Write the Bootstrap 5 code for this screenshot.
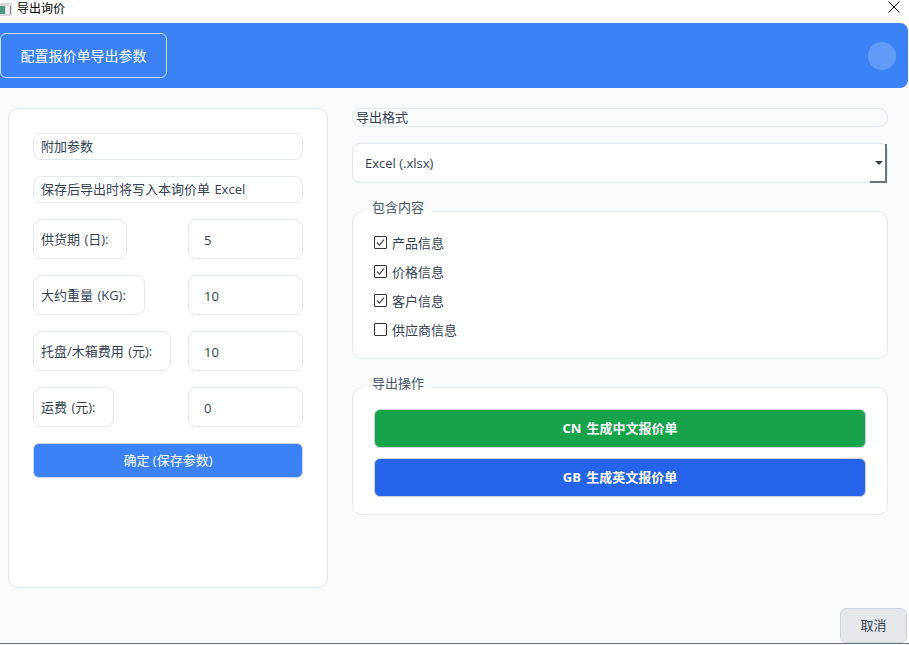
<!DOCTYPE html>
<html lang="zh-CN">
<head>
  <meta charset="UTF-8">
  <meta name="viewport" content="width=device-width, initial-scale=1.0">
  <title>导出询价</title>
  <link href="https://cdn.jsdelivr.net/npm/bootstrap@5.3.0/dist/css/bootstrap.min.css" rel="stylesheet">
  <style>
    html, body {
      height: 100%;
      overflow: hidden;
    }
    body {
      background-color: #f8fafc;
      color: #334155;
      font-family: "Open Sans", "Noto Sans CJK SC", sans-serif;
      font-size: 13px;
    }
    .app-shell {
      height: 644px;
      border-bottom: 1px solid #6b7280;
    }
    .title-bar {
      height: 23px;
      background: #fff;
      color: #000;
      font-size: 12px;
      padding-right: 9px;
    }
    .title-icon {
      width: 12px;
      height: 13px;
      margin-right: 5px;
    }
    .title-close {
      margin-top: 1px;
    }
    .head-bar {
      height: 65px;
      width: 908px;
      background: #3b82f6;
      border-radius: 0 8px 8px 0;
      padding: 10px 12px 10px 0;
    }
    .head-title {
      width: 167px;
      height: 45px;
      border: 1px solid rgba(255, 255, 255, .75);
      border-radius: 6px;
      color: #fff;
      font-size: 14px;
    }
    .head-dot {
      width: 28px;
      height: 28px;
      background: rgba(255, 255, 255, .2);
    }
    .page-main {
      padding: 20px 21px 0 8px;
      gap: 24px;
    }
    .side-panel {
      width: 320px;
      height: 480px;
      background: #fff;
      border: 1px solid #e2e8f0;
      border-radius: 10px;
      padding: 24px;
      gap: 16px;
    }
    .tag-box {
      background: #fff;
      border: 1px solid #e2e8f0;
      border-radius: 8px;
      padding: 0 7px;
      height: 27px;
      line-height: 25px;
      word-spacing: 1px;
    }
    .field-label {
      height: 40px;
      line-height: 38px;
      padding-right: 18px;
    }
    .num-input.form-control {
      width: 115px;
      height: 40px;
      padding: 1px 15px 0;
      font-size: 13px;
      color: #334155;
      border: 1px solid #e2e8f0;
      border-radius: 8px;
    }
    .save-btn.btn {
      height: 35px;
      background: #3b82f6;
      border: 1px solid #cbd5e1;
      border-radius: 6px;
      color: #fff;
      font-size: 13px;
      padding: 0;
    }
    .right-col {
      width: 536px;
      gap: 16px;
    }
    .format-label {
      height: 19px;
      line-height: 17px;
      background: #f8fafc;
      border: 1px solid #e2e8f0;
      border-radius: 9px;
      padding: 0 3px;
    }
    .format-pick {
      height: 40px;
    }
    .format-pick .form-select {
      height: 40px;
      padding: 2px 12px 0;
      font-size: 13px;
      color: #334155;
      background-image: none;
      border: 1px solid #e2e8f0;
      border-radius: 8px;
    }
    .drop-corner {
      position: absolute;
      top: 1px;
      right: 1px;
      width: 17px;
      height: 39px;
      border-right: 2px solid #6b7280;
      border-bottom: 2px solid #6b7280;
      pointer-events: none;
    }
    .drop-corner::after {
      content: "";
      position: absolute;
      top: 17px;
      left: 5px;
      border-style: solid;
      border-width: 4px 4px 0;
      border-color: #334155 transparent transparent;
    }
    .group-box {
      background: #fff;
      border: 1px solid #e2e8f0;
      border-radius: 10px;
      padding: 0 21px 17px;
    }
    .group-box legend {
      float: none;
      width: auto;
      margin: 0 0 0 -10px;
      padding: 0 8px 8px;
      font-size: 13px;
      line-height: 16px;
      color: #475569;
    }
    .check-list {
      padding-top: 11px;
      padding-bottom: 2px;
      gap: 11px;
    }
    .check-row.form-check {
      min-height: 18px;
      line-height: 18px;
      margin: 0;
      padding-left: 18px;
    }
    .check-row .form-check-input {
      width: 13px;
      height: 13px;
      margin: 2px 0 0 -18px;
      background-color: #fff;
      border: 1px solid #333;
      border-radius: 1px;
    }
    .check-row .form-check-input:checked {
      background-color: #fff;
      border-color: #333;
      background-size: 11px;
      background-image: url("data:image/svg+xml,%3csvg xmlns='http://www.w3.org/2000/svg' viewBox='0 0 11 11'%3e%3cpath fill='none' stroke='%23444' stroke-width='1.2' d='M2 5.5l2.4 2.6L9 2.6'/%3e%3c/svg%3e");
    }
    .action-list {
      padding-top: 10px;
      gap: 10px;
    }
    .make-btn.btn {
      height: 39px;
      border: 1px solid #cbd5e1;
      border-radius: 6px;
      color: #fff;
      font-size: 13px;
      font-weight: 700;
      padding: 0;
      word-spacing: 2px;
    }
    .make-cn.btn {
      background: #16a34a;
    }
    .make-en.btn {
      background: #2563eb;
    }
    .foot-bar {
      padding-right: 2px;
    }
    .cancel-btn.btn {
      width: 67px;
      height: 35px;
      background: #e5e7eb;
      border: 1px solid #cbd5e1;
      border-radius: 6px;
      color: #334155;
      font-size: 13px;
      padding: 0;
    }
  </style>
</head>
<body>
  <div class="app-shell d-flex flex-column">
    <!-- window title -->
    <div class="title-bar d-flex align-items-start justify-content-between">
      <div class="d-flex align-items-center">
        <svg class="title-icon" viewBox="0 0 12 13">
          <rect x="0" y="0" width="12" height="13" fill="#d9d9d9"/>
          <rect x="0" y="3" width="5" height="8" fill="#4d9a84"/>
          <rect x="6" y="3" width="3" height="8" fill="#f4f4f4"/>
          <rect x="10" y="3" width="1" height="8" fill="#8a8a8a"/>
        </svg>
        <span>导出询价</span>
      </div>
      <svg class="title-close" width="12" height="12" viewBox="0 0 12 12">
        <path d="M.5.5l11 11M11.5.5l-11 11" stroke="#000" stroke-width="1" fill="none"/>
      </svg>
    </div>

    <!-- blue header -->
    <div class="head-bar d-flex align-items-center justify-content-between">
      <div class="head-title d-flex align-items-center justify-content-center">配置报价单导出参数</div>
      <div class="head-dot rounded-circle"></div>
    </div>

    <div class="page-main d-flex flex-grow-1">
      <!-- extra parameters -->
      <div class="side-panel d-flex flex-column">
        <div class="tag-box">附加参数</div>
        <div class="tag-box">保存后导出时将写入本询价单 Excel</div>
        <div class="d-flex justify-content-between">
          <div class="tag-box field-label">供货期 (日):</div>
          <input type="text" class="num-input form-control" value="5">
        </div>
        <div class="d-flex justify-content-between">
          <div class="tag-box field-label">大约重量 (KG):</div>
          <input type="text" class="num-input form-control" value="10">
        </div>
        <div class="d-flex justify-content-between">
          <div class="tag-box field-label">托盘/木箱费用 (元):</div>
          <input type="text" class="num-input form-control" value="10">
        </div>
        <div class="d-flex justify-content-between">
          <div class="tag-box field-label">运费 (元):</div>
          <input type="text" class="num-input form-control" value="0">
        </div>
        <button type="button" class="save-btn btn w-100">确定 (保存参数)</button>
      </div>

      <!-- export options -->
      <div class="right-col d-flex flex-column">
        <div class="format-label">导出格式</div>
        <div class="format-pick position-relative">
          <select class="form-select">
            <option>Excel (.xlsx)</option>
          </select>
          <span class="drop-corner"></span>
        </div>
        <fieldset class="group-box">
          <legend>包含内容</legend>
          <div class="check-list d-flex flex-column">
            <div class="check-row form-check">
              <input class="form-check-input" type="checkbox" id="chkProduct" checked>
              <label class="form-check-label" for="chkProduct">产品信息</label>
            </div>
            <div class="check-row form-check">
              <input class="form-check-input" type="checkbox" id="chkPrice" checked>
              <label class="form-check-label" for="chkPrice">价格信息</label>
            </div>
            <div class="check-row form-check">
              <input class="form-check-input" type="checkbox" id="chkCustomer" checked>
              <label class="form-check-label" for="chkCustomer">客户信息</label>
            </div>
            <div class="check-row form-check">
              <input class="form-check-input" type="checkbox" id="chkSupplier">
              <label class="form-check-label" for="chkSupplier">供应商信息</label>
            </div>
          </div>
        </fieldset>
        <fieldset class="group-box">
          <legend>导出操作</legend>
          <div class="action-list d-flex flex-column">
            <button type="button" class="make-btn make-cn btn w-100">CN 生成中文报价单</button>
            <button type="button" class="make-btn make-en btn w-100">GB 生成英文报价单</button>
          </div>
        </fieldset>
      </div>
    </div>

    <div class="foot-bar d-flex justify-content-end">
      <button type="button" class="cancel-btn btn">取消</button>
    </div>
  </div>
  <script src="https://cdn.jsdelivr.net/npm/bootstrap@5.3.0/dist/js/bootstrap.bundle.min.js"></script>
</body>
</html>
